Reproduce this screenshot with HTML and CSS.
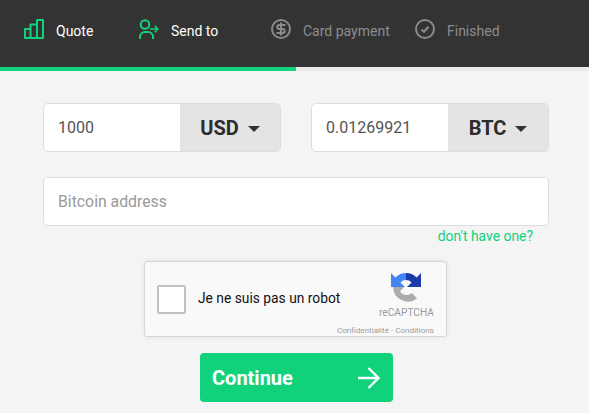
FILE: index.html
```html
<!DOCTYPE html>
<html lang="en">
<head>
<meta charset="utf-8">
<title>Send to</title>
<link rel="stylesheet" href="styles.css">
</head>
<body>
<header class="steps">
  <div class="step active">
    <svg class="step-icon" viewBox="0 0 20 20" fill="none" stroke="currentColor" stroke-width="2" stroke-linejoin="round"><path d="M1 10h5.500v9H1zM6.500 19V5.500H13V19M13 19V1h6v18zM1 19h18"/></svg>
    <span>Quote</span>
  </div>
  <div class="step active">
    <svg class="step-icon" viewBox="0 0 20 20" fill="none" stroke="currentColor" stroke-width="2"><circle cx="6" cy="5.500" r="4.300"/><path d="M1 20v-2a5 5 0 0 1 5-5h3a5 5 0 0 1 5 5v2"/><path stroke-width="1.500" d="M11 10h8M15.700 6.700l3.300 3.300-3.300 3.300"/></svg>
    <span>Send to</span>
  </div>
  <div class="step">
    <svg class="step-icon" viewBox="0 0 20 20" fill="none" stroke="currentColor"><circle cx="10" cy="10" r="9" stroke-width="2"/><path stroke-width="2" d="M14.500 6H8.300a2 2 0 0 0 0 4h3.400a2 2 0 0 1 0 4H5.500M10 3.500v13"/></svg>
    <span>Card payment</span>
  </div>
  <div class="step">
    <svg class="step-icon" viewBox="0 0 20 20" fill="none" stroke="currentColor"><circle cx="10" cy="10" r="9" stroke-width="2"/><path stroke-width="2.200" d="M6.500 10.500l2.500 2.300 4.500-5"/></svg>
    <span>Finished</span>
  </div>
</header>
<div class="progress"><div class="progress-fill"></div></div>
<main class="form">
  <div class="amounts">
    <div class="amount">
      <div class="amount-value">1000</div>
      <div class="currency">USD<i class="caret"></i></div>
    </div>
    <div class="amount">
      <div class="amount-value">0.01269921</div>
      <div class="currency">BTC<i class="caret"></i></div>
    </div>
  </div>
  <div class="address">Bitcoin address</div>
  <a class="hint">don't have one?</a>
  <div class="captcha">
    <div class="captcha-check"></div>
    <div class="captcha-label">Je ne suis pas un robot</div>
    <div class="captcha-brand">
      <svg class="captcha-logo" viewBox="0 0 32 32">
        <path fill="#ababab" d="M3 15H14L10 19.500A8 8 0 0 0 22 21L27 26.500A15 15 0 0 1 3 15Z"/>
        <path fill="#4285f4" d="M16 1A15 15 0 0 0 5.400 5.400L1 1V15H15L10.400 10.400A8 8 0 0 1 16 8Z"/>
        <path fill="#1c3aa9" d="M16 1A15 15 0 0 1 26.600 5.400L31 1V15H17L21.600 10.400A8 8 0 0 0 16 8Z"/>
      </svg>
      <div class="captcha-name">reCAPTCHA</div>
      <div class="captcha-links">Confidentialité - Conditions</div>
    </div>
  </div>
  <button class="continue" type="button">
    <span>Continue</span>
    <svg class="continue-arrow" viewBox="0 0 22 22" fill="none" stroke="#fff" stroke-width="2.400"><path d="M0 11h20M10.500 1l10 10-10 10"/></svg>
  </button>
</main>
</body>
</html>
```

FILE: styles.css
```css
* { box-sizing: border-box; }
html, body { margin: 0; height: 100%; }
body {
  background: #f4f4f4;
  font-family: Roboto, "Liberation Sans", sans-serif;
  overflow: hidden;
}
.steps {
  height: 67px;
  background: #333;
  padding-left: 24px;
  display: grid;
  grid-template-columns: 115px 132px 144px 1fr;
  align-items: center;
}
.step {
  display: flex;
  align-items: center;
  gap: 12px;
  font-size: 14px;
  color: #8d8d8d;
  margin-top: -5px;
}
.step.active { color: #fff; }
.step-icon { width: 20px; height: 20px; color: #8a8a8a; flex: none; margin-bottom: 4px; }
.step.active .step-icon { color: #11d27b; }
.progress { height: 4px; background: #ebebeb; }
.progress-fill { width: 296px; height: 100%; background: #11d27b; }
.form {
  padding: 32px 40px 0 43px;
  display: flex;
  flex-direction: column;
}
.amounts { display: flex; gap: 30px; }
.amount {
  width: 238px;
  height: 49px;
  display: flex;
  border: 1px solid #dedede;
  border-radius: 5px;
  overflow: hidden;
  background: #fff;
}
.amount-value {
  width: 136px;
  padding-left: 14px;
  font-size: 16px;
  line-height: 47px;
  color: #555;
}
.currency {
  flex: 1;
  background: #e4e4e4;
  display: flex;
  align-items: center;
  justify-content: center;
  gap: 9px;
  font-size: 20px;
  font-weight: 700;
  color: #2c2c2c;
}
.caret {
  width: 0;
  height: 0;
  border-left: 6.500px solid transparent;
  border-right: 6.500px solid transparent;
  border-top: 6px solid #333;
  margin-top: 2px;
}
.address {
  margin-top: 25px;
  width: 506px;
  height: 49px;
  background: #fff;
  border: 1px solid #dedede;
  border-radius: 5px;
  padding-left: 14px;
  font-size: 15.800px;
  line-height: 47px;
  color: #999;
}
.hint {
  width: 490px;
  margin-top: 1px;
  margin-bottom: 1px;
  text-align: right;
  font-size: 13.900px;
  line-height: 18px;
  color: #11d27b;
}
.captcha {
  align-self: flex-start;
  margin: 15px 0 0 101px;
  width: 303px;
  height: 76px;
  background: #f9f9f9;
  border: 1px solid #d6d6d6;
  border-radius: 3px;
  box-shadow: 0 0 4px rgba(0, 0, 0, .08);
  display: flex;
  align-items: center;
  padding-left: 12px;
}
.captcha-check {
  width: 29px;
  height: 29px;
  background: #fff;
  border: 2px solid #c1c1c1;
  border-radius: 2px;
}
.captcha-label {
  margin: -2px 0 0 12px;
  font-size: 13.800px;
  color: #111;
}
.captcha-brand {
  margin-left: auto;
  width: 100px;
  align-self: stretch;
  padding: 10px 12px 0 0;
  display: flex;
  flex-direction: column;
  align-items: flex-end;
  white-space: nowrap;
}
.captcha-logo { width: 32px; height: 32px; margin-right: 12px; }
.captcha-name {
  font-size: 10.200px;
  line-height: 12px;
  margin-top: 3px;
  color: #9b9b9b;
}
.captcha-links {
  font-size: 8.100px;
  line-height: 10px;
  margin-top: 6px;
  color: #9b9b9b;
}
.continue {
  align-self: flex-start;
  margin: 16px 0 0 157px;
  width: 193px;
  height: 49px;
  background: #11d27b;
  border: 0;
  border-radius: 4px;
  padding: 0 13px 0 12px;
  display: flex;
  align-items: center;
  justify-content: space-between;
  font-family: Roboto, "Liberation Sans", sans-serif;
  font-size: 20px;
  font-weight: 700;
  color: #fff;
}
.continue-arrow { width: 22px; height: 22px; }
```
